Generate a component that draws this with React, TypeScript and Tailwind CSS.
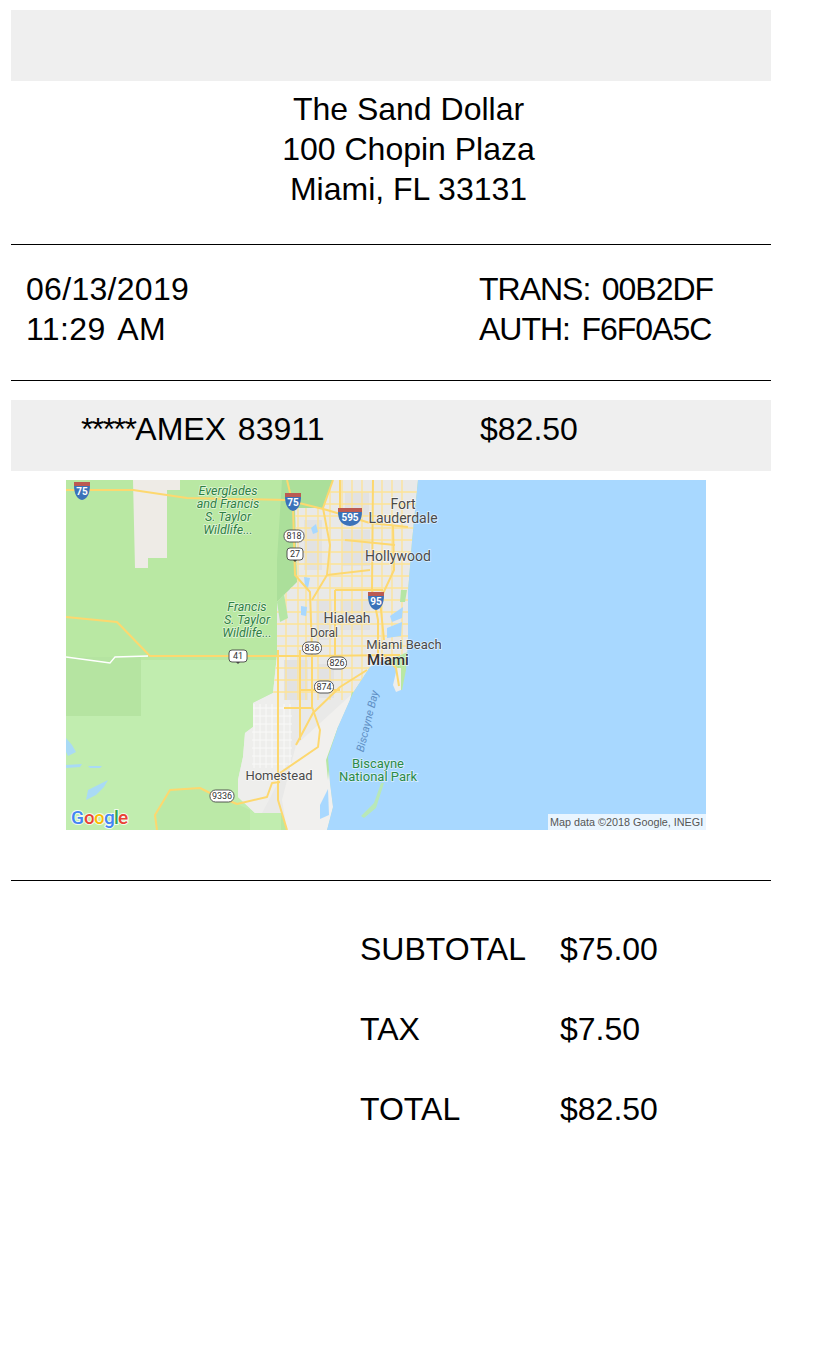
const ROAD = "#fdd86f";
const STREET = "#fde396";

const URBAN =
  "M333 480 L323 508 L295 508 L297 582 L277 602 L277 655 L273 693 L253 703 L253 727 L245 733 L243 757 L238 780 L238 797 L255 813 L282 813 L287 830 L327 830 L333 807 L330 783 L328 757 L338 727 L353 693 L370 667 L408 652 L408 592 L412 542 L418 480 Z";

const OCEAN =
  "M418 480 L706 480 L706 830 L327 830 L333 807 L330 783 L328 757 L338 727 L353 693 L370 667 L384 660 L396 668 L398 690 L402 690 L406 670 L408 640 L408 592 L412 542 Z";

const MAIN_ROADS = [
  "M66 490 L133 490 L187 498 L287 500 L327 510 L370 523 L408 527",
  "M287 480 L293 505 L295 575 L310 592 L312 650 L312 707 L320 730 L318 747 L280 773",
  "M66 617 L117 622 L148 654 L150 656 L312 656 L400 655",
  "M157 830 L155 815 L170 790 L200 788 L210 793 L237 804 L267 797 L272 783 L280 782",
  "M278 650 L278 800 L287 830",
  "M367 670 L340 687 L313 713 L296 745",
  "M333 480 L323 508 L330 545 L327 575 L312 600",
  "M373 480 L372 590 L378 620 L378 660",
  "M393 525 L394 570 L380 600 L384 640",
  "M327 575 L370 570",
  "M335 590 L335 655",
  "M335 590 L383 590",
  "M340 480 L340 520",
  "M345 540 L395 545",
  "M300 690 L340 690",
  "M284 708 L312 708",
  "M300 650 L300 740",
  "M384 655 L396 668 L399 686",
];

const HORIZONTAL_STREETS = [492, 504, 516, 528, 540, 552, 564, 576, 588, 600, 612, 624, 636, 646, 668, 680, 692];
const VERTICAL_STREETS = [286, 298, 306, 318, 330, 342, 352, 362, 382, 392, 402];
const SOUTH_STREETS_H = [708, 716, 724, 732, 740, 748, 756, 764];
const SOUTH_STREETS_V = [254, 260, 266, 272, 284, 290];
const DARK_BLOCKS = [
  [304, 520, 18, 50],
  [342, 530, 28, 36],
  [345, 492, 24, 24],
  [316, 600, 16, 40],
  [340, 600, 30, 30],
  [284, 660, 24, 40],
  [318, 664, 16, 34],
];

function Shield({ x, y, label, wide }: { x: number; y: number; label: string; wide?: boolean }) {
  const half = wide ? 12 : 8;
  return (
    <g>
      <path
        d={`M${x - half} ${y - 6} L${x + half} ${y - 6} C${x + half} ${y + 3} ${x + half - 3} ${y + 8} ${x} ${y + 9} C${x - half + 3} ${y + 8} ${x - half} ${y + 3} ${x - half} ${y - 6} Z`}
        fill="#3b72b9"
      />
      <path d={`M${x - half} ${y - 9} L${x + half} ${y - 9} L${x + half} ${y - 5} L${x - half} ${y - 5} Z`} fill="#bb5a52" />
      <text x={x} y={y + 4} textAnchor="middle" fontSize="10" fontWeight="700" fill="#fff" className="font-['Roboto']">
        {label}
      </text>
    </g>
  );
}

function RoadBadge({ x, y, w, label, us }: { x: number; y: number; w: number; label: string; us?: boolean }) {
  return (
    <g>
      <rect x={x - w / 2} y={y - 6} width={w} height={12} rx={us ? 3 : 5.5} fill="#fff" stroke="#444" strokeWidth="0.9" />
      {us && <path d={`M${x - 2} ${y + 6} L${x} ${y + 8} L${x + 2} ${y + 6} Z`} fill="#444" />}
      <text x={x} y={y + 3.2} textAnchor="middle" fontSize="9" fill="#333" className="font-['Roboto']">
        {label}
      </text>
    </g>
  );
}

function Label({
  x,
  y,
  size = 13,
  color = "#4a4a4a",
  italic,
  bold,
  children,
}: {
  x: number;
  y: number;
  size?: number;
  color?: string;
  italic?: boolean;
  bold?: boolean;
  children: string;
}) {
  return (
    <text
      x={x}
      y={y}
      textAnchor="middle"
      fontSize={size}
      fill={color}
      fontStyle={italic ? "italic" : undefined}
      fontWeight={bold ? 500 : 400}
      stroke="#ffffff"
      strokeOpacity="0.6"
      strokeWidth="1.5"
      paintOrder="stroke"
      className="font-['Roboto']"
    >
      {children}
    </text>
  );
}

function MapImage() {
  return (
    <svg viewBox="66 480 640 350" className="block w-[640px] h-[350px]">
      <defs>
        <clipPath id="urban">
          <path d={URBAN} />
        </clipPath>
      </defs>

      <rect x="66" y="480" width="640" height="350" fill="#b9e8a3" />
      <rect x="66" y="660" width="215" height="170" fill="#c1edaf" />
      <rect x="66" y="657" width="75" height="59" fill="#b5e4a1" />
      <path d="M282 480 L340 480 L340 520 L300 600 L277 610 L277 560 Z" fill="#abdf9a" />
      <path d="M155 815 L170 790 L200 788 L237 804 L250 810 L250 830 L157 830 Z" fill="#bbe9a7" />

      {/* everglades gray parcel */}
      <path d="M133 480 L180 480 L180 490 L167 490 L167 558 L148 558 L148 568 L135 568 Z" fill="#eeebe6" />

      {/* small lakes in the southwest */}
      <g fill="#a9daf5">
        <path d="M66 738 L72 745 L76 752 L68 756 L66 752 Z" />
        <path d="M88 790 L108 780 L104 787 L96 795 L86 800 Z" />
        <path d="M66 765 L82 764 L80 767 L66 768 Z" />
        <path d="M88 766 L102 766 L100 768 L90 768 Z" />
      </g>

      <path d={URBAN} fill="#e9e9e8" />
      <path d="M253 703 L273 693 L277 655 L290 655 L290 760 L262 813 L255 813 L238 797 L238 780 L243 757 L245 733 L253 727 Z" fill="#eeeeec" />
      <path d="M296 745 L353 693 L338 727 L328 757 L330 783 L333 807 L327 830 L287 830 L282 800 Z" fill="#f1f0ee" />

      <g clipPath="url(#urban)">
        {DARK_BLOCKS.map(([x, y, w, h]) => (
          <rect key={`${x}-${y}`} x={x} y={y} width={w} height={h} fill="#e2e2e2" />
        ))}
        {/* street grid */}
        <g stroke={STREET} strokeWidth="1.3">
          {HORIZONTAL_STREETS.map((y) => (
            <line key={y} x1="240" x2="420" y1={y} y2={y} />
          ))}
          {VERTICAL_STREETS.map((x) => (
            <line key={x} x1={x} x2={x} y1="480" y2="700" />
          ))}
        </g>
        <g stroke="#f9f9f8" strokeWidth="1">
          {SOUTH_STREETS_H.map((y) => (
            <line key={y} x1="252" x2="292" y1={y} y2={y} />
          ))}
          {SOUTH_STREETS_V.map((x) => (
            <line key={x} x1={x} x2={x} y1="704" y2="768" />
          ))}
        </g>
      </g>

      {/* water inside the urban area */}
      <g fill="#a8d8ff">
        <path d="M390 616 L403 607 L402 618 L392 622 Z" />
        <path d="M387 628 L402 622 L401 636 L387 638 Z" />
        <path d="M304 577 L310 578 L308 588 L305 586 Z" />
        <path d="M301 606 L307 607 L306 616 L301 615 Z" />
        <path d="M320 805 L328 789 L329 815 L320 819 Z" />
        <path d="M311 528 L316 524 L318 532 L313 534 Z" />
      </g>

      {/* coastal green strips */}
      <g fill="#b5e6a4">
        <path d="M338 727 L342 722 L338 745 L330 760 L328 780 L326 760 Z" />
        <path d="M352 692 L358 694 L354 702 L350 700 Z" />
        <path d="M277 602 L284 594 L288 618 L280 622 Z" />
        <path d="M401 590 L407 590 L405 602 L400 602 Z" />
      </g>

      <path d={OCEAN} fill="#a8d8ff" />

      {/* barrier islands */}
      <path d="M381 783 L384 783 L376 808 L364 818 L361 816 L374 803 Z" fill="#b8e8b8" />
      <path d="M397 668 L401 668 L401 690 L396 692 L393 685 Z" fill="#eeeeec" />

      {MAIN_ROADS.map((d) => (
        <path key={d} d={d} fill="none" stroke={ROAD} strokeWidth="2" strokeLinejoin="round" />
      ))}
      <path d="M66 657 L103 662 L110 663 L115 657 L148 656" fill="none" stroke="#ffffff" strokeWidth="1.3" />

      <Shield x={82} y={491} label="75" />
      <Shield x={293} y={502} label="75" />
      <Shield x={350} y={517} label="595" wide />
      <Shield x={376} y={601} label="95" />
      <RoadBadge x={294} y={536} w={20} label="818" />
      <RoadBadge x={295} y={554} w={16} label="27" us />
      <RoadBadge x={238} y={656} w={18} label="41" us />
      <RoadBadge x={312} y={648} w={19} label="836" />
      <RoadBadge x={337} y={663} w={19} label="826" />
      <RoadBadge x={324} y={687} w={19} label="874" />
      <RoadBadge x={222} y={796} w={24} label="9336" />

      <Label x={228} y={495} size={12.5} color="#2f7f44" italic>Everglades</Label>
      <Label x={228} y={508} size={12.5} color="#2f7f44" italic>and Francis</Label>
      <Label x={228} y={521} size={12.5} color="#2f7f44" italic>S. Taylor</Label>
      <Label x={228} y={534} size={12.5} color="#2f7f44" italic>Wildlife...</Label>
      <Label x={247} y={611} size={12.5} color="#2f7f44" italic>Francis</Label>
      <Label x={247} y={624} size={12.5} color="#2f7f44" italic>S. Taylor</Label>
      <Label x={247} y={637} size={12.5} color="#2f7f44" italic>Wildlife...</Label>

      <Label x={403} y={509} size={14}>Fort</Label>
      <Label x={403} y={523} size={14}>Lauderdale</Label>
      <Label x={398} y={561} size={14}>Hollywood</Label>
      <Label x={347} y={623} size={14}>Hialeah</Label>
      <Label x={324} y={637} size={12}>Doral</Label>
      <Label x={404} y={649}>Miami Beach</Label>
      <Label x={388} y={665} size={15} color="#333333" bold>Miami</Label>
      <Label x={279} y={780}>Homestead</Label>
      <Label x={378} y={768} color="#2a8a48">Biscayne</Label>
      <Label x={378} y={781} color="#2a8a48">National Park</Label>

      <text
        x="371"
        y="722"
        textAnchor="middle"
        fontSize="11"
        fontStyle="italic"
        fill="#5f8fc4"
        transform="rotate(-76 371 722)"
        className="font-['Roboto']"
      >
        Biscayne Bay
      </text>

      {/* google logo */}
      <g fontSize="19" fontWeight="500" stroke="#ffffff" strokeOpacity="0.8" strokeWidth="2" paintOrder="stroke" className="font-['Roboto']">
        <text x="71" y="824" fill="#4285f4">G</text>
        <text x="84" y="824" fill="#e94235">o</text>
        <text x="94" y="824" fill="#fabb05">o</text>
        <text x="104" y="824" fill="#4285f4">g</text>
        <text x="114" y="824" fill="#34a853">l</text>
        <text x="118" y="824" fill="#e94235">e</text>
      </g>

      <rect x="548" y="814" width="158" height="16" fill="#ffffff" fillOpacity="0.75" />
      <text x="550" y="826" fontSize="10.8" fill="#555555" className="font-['Liberation_Sans']">
        Map data ©2018 Google, INEGI
      </text>
    </svg>
  );
}

function TotalRow({ label, amount }: { label: string; amount: string }) {
  return (
    <div className="flex h-[80px] items-center">
      <div className="w-[200px]">{label}</div>
      <div>{amount}</div>
    </div>
  );
}

export default function App() {
  return (
    <div className="min-h-[1361px] bg-white pt-[10px] font-['Liberation_Sans',sans-serif] text-[32px] leading-[40px] text-black">
      <div className="ml-[11px] w-[760px]">
        <div className="h-[71px] bg-[#efefef]" />

        <div className="mt-[8px] pl-[35px] text-center">
          <div>The Sand Dollar</div>
          <div>100 Chopin Plaza</div>
          <div>Miami, FL 33131</div>
        </div>

        <hr className="mt-[35px] border-black" />

        <div className="mt-[24px] flex">
          <div className="w-[468px] pl-[15px]">
            <div className="tracking-[0.3px]">06/13/2019</div>
            <div className="tracking-[0.4px] [word-spacing:4px]">11:29 AM</div>
          </div>
          <div className="tracking-[-1px] [word-spacing:3.5px]">
            <div>TRANS: 00B2DF</div>
            <div>AUTH: F6F0A5C</div>
          </div>
        </div>

        <hr className="mt-[31px] border-black" />

        <div className="mt-[19px] flex h-[71px] bg-[#efefef] pt-[9px]">
          <div className="w-[468px] pl-[70px] [word-spacing:3px]">
            <span className="tracking-[-1.6px]">*****</span>AMEX 83911
          </div>
          <div className="pl-[1px]">$82.50</div>
        </div>

        <div className="mt-[9px] pl-[55px]">
          <MapImage />
        </div>

        <hr className="mt-[50px] border-black" />

        <div className="mt-[28px] pl-[349px]">
          <TotalRow label="SUBTOTAL" amount="$75.00" />
          <TotalRow label="TAX" amount="$7.50" />
          <TotalRow label="TOTAL" amount="$82.50" />
        </div>
      </div>
    </div>
  );
}
